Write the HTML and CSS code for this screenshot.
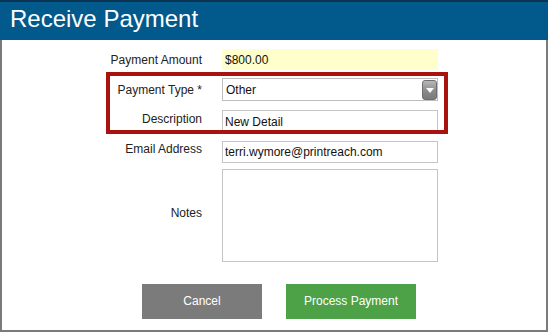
FILE: index.html
```html
<!DOCTYPE html>
<html>
<head>
<meta charset="utf-8">
<link rel="stylesheet" href="styles.css">
</head>
<body>
<div class="dialog">
  <div class="header">Receive Payment</div>
  <div class="body">
    <div class="form">
      <div class="row r-amount">
        <div class="label">Payment Amount</div>
        <div class="field amount">$800.00</div>
      </div>
      <div class="row r-type">
        <div class="label">Payment Type *</div>
        <div class="field select">
          <span class="select-text">Other</span>
          <span class="select-btn"><span class="tri"></span></span>
        </div>
      </div>
      <div class="row r-desc">
        <div class="label lift">Description</div>
        <div class="field input">New Detail</div>
      </div>
      <div class="row r-email">
        <div class="label lift">Email Address</div>
        <div class="field input email">terri.wymore@printreach.com</div>
      </div>
      <div class="row r-notes">
        <div class="label lift">Notes</div>
        <div class="field textarea"></div>
      </div>
    </div>
    <div class="actions">
      <div class="btn cancel">Cancel</div>
      <div class="btn process">Process Payment</div>
    </div>
    <div class="highlight"></div>
  </div>
</div>
</body>
</html>
```

FILE: styles.css
```css
* { box-sizing: border-box; }
html, body { margin: 0; padding: 0; background: #fff; }
body {
  font-family: "Liberation Sans", Arial, sans-serif;
  font-size: 12px;
  line-height: 14px;
  color: #222;
}
.dialog {
  width: 548px;
  height: 332px;
  display: flex;
  flex-direction: column;
}
.header {
  height: 40px;
  border-top: 2px solid #0b3352;
  background: #02598b;
  color: #fff;
  font-size: 24px;
  line-height: 34px;
  padding-left: 10px;
}
.body {
  position: relative;
  flex: 1;
  border: 2px solid #7a7a7a;
  border-top: none;
}
.form {
  display: flex;
  flex-direction: column;
  padding-top: 9px;
}
.row {
  display: grid;
  grid-template-columns: 200px 216px;
  column-gap: 20px;
  align-items: center;
}
.r-type { margin-top: 8px; }
.r-desc { margin-top: 9px; }
.r-email { margin-top: 8px; }
.r-notes { margin-top: 6px; }
.label {
  text-align: right;
  color: #222;
}
.label.lift { margin-bottom: 6px; }
.field {
  color: #111;
  white-space: nowrap;
}
.amount {
  height: 21px;
  background: #ffffcc;
  padding: 3.5px 3px;
}
.select {
  height: 23px;
  border: 1px solid #bdbdbd;
  display: flex;
  align-items: center;
  padding-left: 3px;
}
.select-text { flex: 1; }
.select-btn {
  width: 15px;
  height: 20px;
  border: 1px solid #6e6e6e;
  border-radius: 3px;
  background: linear-gradient(#b8b8b8, #8a8a8a 55%, #7a7a7a);
  display: flex;
  align-items: center;
  justify-content: center;
}
.tri {
  width: 0;
  height: 0;
  border-left: 4px solid transparent;
  border-right: 4px solid transparent;
  border-top: 5px solid #fff;
  margin-top: 1px;
}
.input {
  height: 23px;
  border: 1px solid #c4c4c4;
  padding: 3.5px 2px;
}
.input.email {
  height: 22px;
  padding: 3px 2px;
}
.textarea {
  height: 93px;
  border: 1px solid #c4c4c4;
}
.actions {
  display: flex;
  gap: 24px;
  margin-top: 22px;
  padding-left: 140px;
}
.btn {
  height: 35px;
  line-height: 35px;
  text-align: center;
  color: #fff;
  font-size: 12px;
}
.cancel { width: 120px; background: #7b7b7b; }
.process { width: 130px; background: #4da147; }
.highlight {
  position: absolute;
  left: 104px;
  top: 32px;
  width: 342px;
  height: 62px;
  border: 4px solid #a8130f;
  pointer-events: none;
}
```
